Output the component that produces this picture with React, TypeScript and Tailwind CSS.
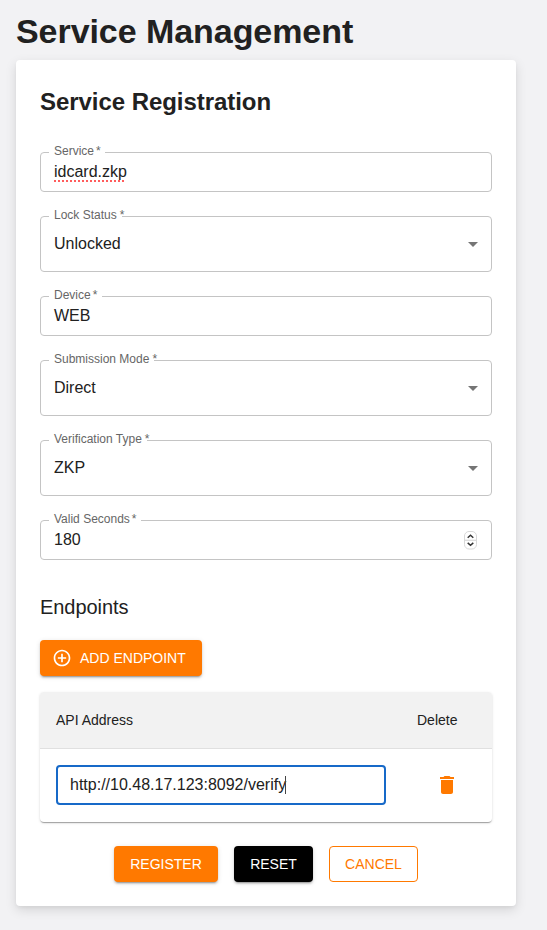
import type { ReactNode } from "react";

type FieldProps = {
  label: string;
  value: string;
  notch: string;
  star: string;
  tall?: boolean;
  misspelled?: boolean;
  children?: ReactNode;
};

function Field({ label, value, notch, star, tall, misspelled, children }: FieldProps) {
  return (
    <div
      className={`relative flex items-center justify-between rounded border border-[#c4c4c4] px-[13px] text-base text-[#212121] ${tall ? "h-14" : "h-10"}`}
    >
      <span className={`absolute -top-px left-2 h-px bg-white ${notch}`} />
      <label className="absolute -top-[10px] left-[13px] flex text-xs leading-4 whitespace-nowrap text-[#666]">
        {label}
        <span className={star}>*</span>
      </label>
      <span
        className={
          misspelled
            ? "underline decoration-[#ff5c5c] decoration-dotted decoration-[1.5px] underline-offset-[3px] [text-decoration-skip-ink:none]"
            : ""
        }
      >
        {value}
      </span>
      {children}
    </div>
  );
}

function Caret() {
  return (
    <svg viewBox="0 0 24 24" className="-mr-[7px] size-6 fill-[#757575]">
      <path d="M7 10l5 5 5-5z" />
    </svg>
  );
}

function Stepper() {
  return (
    <svg viewBox="0 0 13 19" className="mr-px h-[19px] w-[13px]" fill="none">
      <rect x="0.5" y="0.5" width="12" height="17.5" rx="4.5" fill="#fff" stroke="#d8d8d8" />
      <path d="M1 9.3h11" stroke="#dcdcdc" strokeWidth="1.3" />
      <path d="M3.7 6.7l2.8-2.4 2.8 2.4M3.7 11.9l2.8 2.4 2.8-2.4" stroke="#333" strokeWidth="1.5" />
    </svg>
  );
}

const raised =
  "shadow-[0_3px_1px_-2px_rgba(0,0,0,0.2),0_2px_2px_0_rgba(0,0,0,0.14),0_1px_5px_0_rgba(0,0,0,0.12)]";

export default function App() {
  return (
    <div className="h-[930px] w-[547px] overflow-hidden bg-[#f2f2f4] pr-[31px] pl-4 font-['Liberation_Sans',Arial,sans-serif] text-[#212121]">
      <h1 className="flex h-[60px] items-center pt-[3px] text-[34px] font-bold tracking-[-0.06px] whitespace-nowrap">
        Service Management
      </h1>
      <main className="h-[846px] rounded bg-white px-6 pt-6 shadow-[0_2px_4px_-1px_rgba(0,0,0,0.06),0_4px_12px_0_rgba(0,0,0,0.12)]">
        <h2 className="flex h-9 items-center text-2xl font-bold tracking-[-0.05px] whitespace-nowrap">
          Service Registration
        </h2>
        <form className="mt-8 flex flex-col gap-6">
          <Field label="Service" value="idcard.zkp" notch="w-14" star="ml-[2px]" misspelled />
          <Field label="Lock Status" value="Unlocked" notch="w-[73px]" star="ml-[3px]" tall>
            <Caret />
          </Field>
          <Field label="Device" value="WEB" notch="w-[53px]" star="ml-[2px]" />
          <Field label="Submission Mode" value="Direct" notch="w-[105px]" star="ml-[3px]" tall>
            <Caret />
          </Field>
          <Field label="Verification Type" value="ZKP" notch="w-[98px]" star="ml-[3px]" tall>
            <Caret />
          </Field>
          <Field label="Valid Seconds" value="180" notch="w-[92px]" star="ml-[2px]">
            <Stepper />
          </Field>
        </form>
        <h3 className="mt-[31px] mb-[17px] flex h-8 items-center text-xl font-normal tracking-[-0.05px]">
          Endpoints
        </h3>
        <button
          className={`flex h-9 w-[162px] items-center rounded bg-[#ff7900] pl-3 text-sm whitespace-nowrap text-white ${raised}`}
        >
          <svg viewBox="0 0 24 24" className="mr-2 size-5 fill-white">
            <path d="M13 7h-2v4H7v2h4v4h2v-4h4v-2h-4V7zm-1-5C6.48 2 2 6.48 2 12s4.48 10 10 10 10-4.48 10-10S17.52 2 12 2zm0 18c-4.41 0-8-3.59-8-8s3.59-8 8-8 8 3.59 8 8-3.59 8-8 8z" />
          </svg>
          ADD ENDPOINT
        </button>
        <section className="mt-4 h-[130px] overflow-hidden rounded shadow-[0_2px_1px_-1px_rgba(0,0,0,0.2),0_1px_1px_0_rgba(0,0,0,0.14),0_1px_3px_0_rgba(0,0,0,0.12)]">
          <div className="flex h-[57px] items-center border-b border-[#e0e0e0] bg-[#f2f2f2] pl-4 text-sm">
            <span className="w-[361px]">API Address</span>
            <span>Delete</span>
          </div>
          <div className="flex h-[73px] items-start pt-4 pl-4">
            <div className="flex h-10 w-[330px] items-center rounded border-2 border-[#1769c8] px-3 text-base">
              http://10.48.17.123:8092/verify
              <span className="-ml-px h-[18px] w-px bg-[#444]" />
            </div>
            <svg viewBox="0 0 24 24" className="mt-2 ml-[49px] size-6 fill-[#ff7900]">
              <path d="M6 19c0 1.1.9 2 2 2h8c1.1 0 2-.9 2-2V7H6v12zM19 4h-3.5l-1-1h-5l-1 1H5v2h14V4z" />
            </svg>
          </div>
        </section>
        <div className="mt-6 flex justify-center gap-4 text-sm text-white">
          <button className={`h-9 w-[104px] rounded bg-[#ff7900] ${raised}`}>REGISTER</button>
          <button className={`h-9 w-[79px] rounded bg-black ${raised}`}>RESET</button>
          <button className="h-9 w-[89px] rounded border border-[#ff7900] text-[#ff7900]">
            CANCEL
          </button>
        </div>
      </main>
    </div>
  );
}
